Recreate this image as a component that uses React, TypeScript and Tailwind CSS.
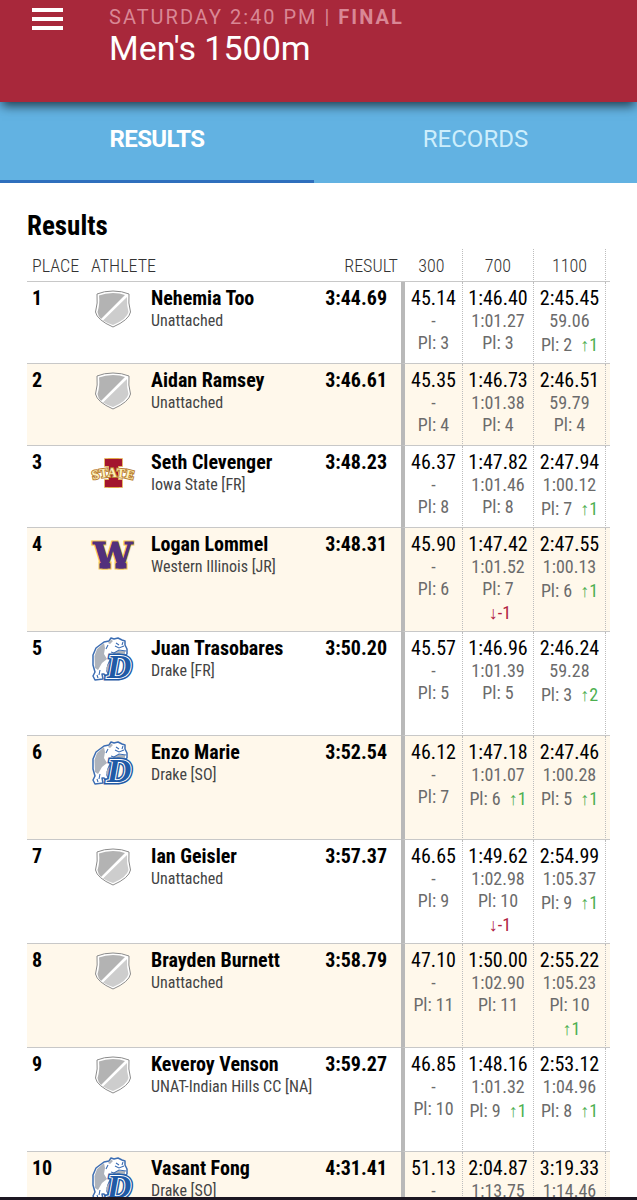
import { useState } from 'react';

type Team = 'none' | 'iowa' | 'wiu' | 'drake';

interface Split {
    time: string;
    lap: string;
    place: number;
    move?: number;
}

interface Result {
    place: number;
    name: string;
    school: string;
    team: Team;
    time: string;
    splits: Split[];
    tall?: boolean;
}

const DISTANCES = ['300', '700', '1100'];

const results: Result[] = [
    {
        place: 1, name: 'Nehemia Too', school: 'Unattached', team: 'none', time: '3:44.69',
        splits: [
            { time: '45.14', lap: '-', place: 3 },
            { time: '1:46.40', lap: '1:01.27', place: 3 },
            { time: '2:45.45', lap: '59.06', place: 2, move: 1 },
        ],
    },
    {
        place: 2, name: 'Aidan Ramsey', school: 'Unattached', team: 'none', time: '3:46.61',
        splits: [
            { time: '45.35', lap: '-', place: 4 },
            { time: '1:46.73', lap: '1:01.38', place: 4 },
            { time: '2:46.51', lap: '59.79', place: 4 },
        ],
    },
    {
        place: 3, name: 'Seth Clevenger', school: 'Iowa State [FR]', team: 'iowa', time: '3:48.23',
        splits: [
            { time: '46.37', lap: '-', place: 8 },
            { time: '1:47.82', lap: '1:01.46', place: 8 },
            { time: '2:47.94', lap: '1:00.12', place: 7, move: 1 },
        ],
    },
    {
        place: 4, name: 'Logan Lommel', school: 'Western Illinois [JR]', team: 'wiu', time: '3:48.31', tall: true,
        splits: [
            { time: '45.90', lap: '-', place: 6 },
            { time: '1:47.42', lap: '1:01.52', place: 7, move: -1 },
            { time: '2:47.55', lap: '1:00.13', place: 6, move: 1 },
        ],
    },
    {
        place: 5, name: 'Juan Trasobares', school: 'Drake [FR]', team: 'drake', time: '3:50.20', tall: true,
        splits: [
            { time: '45.57', lap: '-', place: 5 },
            { time: '1:46.96', lap: '1:01.39', place: 5 },
            { time: '2:46.24', lap: '59.28', place: 3, move: 2 },
        ],
    },
    {
        place: 6, name: 'Enzo Marie', school: 'Drake [SO]', team: 'drake', time: '3:52.54', tall: true,
        splits: [
            { time: '46.12', lap: '-', place: 7 },
            { time: '1:47.18', lap: '1:01.07', place: 6, move: 1 },
            { time: '2:47.46', lap: '1:00.28', place: 5, move: 1 },
        ],
    },
    {
        place: 7, name: 'Ian Geisler', school: 'Unattached', team: 'none', time: '3:57.37', tall: true,
        splits: [
            { time: '46.65', lap: '-', place: 9 },
            { time: '1:49.62', lap: '1:02.98', place: 10, move: -1 },
            { time: '2:54.99', lap: '1:05.37', place: 9, move: 1 },
        ],
    },
    {
        place: 8, name: 'Brayden Burnett', school: 'Unattached', team: 'none', time: '3:58.79', tall: true,
        splits: [
            { time: '47.10', lap: '-', place: 11 },
            { time: '1:50.00', lap: '1:02.90', place: 11 },
            { time: '2:55.22', lap: '1:05.23', place: 10, move: 1 },
        ],
    },
    {
        place: 9, name: 'Keveroy Venson', school: 'UNAT-Indian Hills CC [NA]', team: 'none', time: '3:59.27', tall: true,
        splits: [
            { time: '46.85', lap: '-', place: 10 },
            { time: '1:48.16', lap: '1:01.32', place: 9, move: 1 },
            { time: '2:53.12', lap: '1:04.96', place: 8, move: 1 },
        ],
    },
    {
        place: 10, name: 'Vasant Fong', school: 'Drake [SO]', team: 'drake', time: '4:31.41', tall: true,
        splits: [
            { time: '51.13', lap: '-', place: 12 },
            { time: '2:04.87', lap: '1:13.75', place: 12 },
            { time: '3:19.33', lap: '1:14.46', place: 12 },
        ],
    },
];

function TeamLogo({ team }: { team: Team }) {
    if (team === 'iowa') {
        return (
            <svg className="overflow-visible" width="44" height="44" viewBox="0 0 44 44" aria-hidden="true">
                <g fill="#a3152e" stroke="#e0a545" strokeWidth="1.600" paintOrder="stroke">
                    <rect x="14" y="8" width="17" height="7" />
                    <rect x="14" y="29" width="17" height="7" />
                    <rect x="18" y="8" width="9" height="28" />
                </g>
                <rect x="14" y="8" width="17" height="7" fill="#a3152e" />
                <rect x="14" y="29" width="17" height="7" fill="#a3152e" />
                <path id="state-arc" d="M0 29.500 Q22 22.500 44 29.500" fill="none" />
                <text textAnchor="middle" fontFamily="Liberation Serif" fontWeight="bold" fontSize="13" fill="#fdf0b8" stroke="#b98035" strokeWidth="2" paintOrder="stroke">
                    <textPath href="#state-arc" startOffset="50%">STATE</textPath>
                </text>
            </svg>
        );
    }
    if (team === 'wiu') {
        return (
            <svg className="overflow-visible" width="44" height="44" viewBox="0 0 44 44" aria-hidden="true">
                <g fill="#52307c" stroke="#f3c54b" strokeWidth="3" paintOrder="stroke">
                    <text x="22" y="35" textAnchor="middle" fontFamily="DejaVu Serif" fontWeight="bold" fontSize="35">W</text>
                    <rect x="9" y="30" width="10" height="5" />
                    <rect x="25" y="30" width="10" height="5" />
                </g>
                <g fill="#52307c" stroke="#52307c">
                    <text x="22" y="35" textAnchor="middle" fontFamily="DejaVu Serif" fontWeight="bold" fontSize="35">W</text>
                    <rect x="9" y="31" width="10" height="4" />
                    <rect x="25" y="31" width="10" height="4" />
                </g>
            </svg>
        );
    }
    if (team === 'drake') {
        return (
            <svg className="overflow-visible" width="44" height="44" viewBox="0 0 44 44" aria-hidden="true">
                <path d="M13 5 L18 4 L20 1 L23 2 L27 1 L31 3 L34 4 L34 8 L36 12 L36 17 L33 19 L20 21 L17 28 L16 34 L18 39 L15 40 L13 37 L11 37 L12 42 L4 43 L2 39 L4 35 L2 28 L2 18 L5 11 Z" fill="#fff" stroke="#3c6db3" strokeWidth="1.500" strokeLinejoin="round" />
                <path d="M13 6 L6 12 L3.500 19 L4 31 L7 33 L11 26 L16 22 L13 17 L14 11 Z" fill="#aeb3bb" />
                <path d="M22 16 L27 14 L34 14 L34 17 L30 19 L23 19 Z M20 2.500 L22 4 L19 7 L17 6 Z M15 31 L18 26 L21 27 L17 36 Z" fill="#aeb3bb" />
                <path d="M24 9 L28 11 L33 9 M25 6 L28 8 M32 5 L31 8 M20 15 L23 16 L28 13 L35 14 M17 8 L15 12 M22 19 L27 17 L33 18 M9 33 L8 38 M6 38 L7 41" fill="none" stroke="#3c6db3" strokeWidth="1.100" />
                <text x="28" y="41" textAnchor="middle" fontFamily="Liberation Serif" fontWeight="bold" fontStyle="italic" fontSize="34" fill="#1f5aa6" stroke="#1f5aa6" strokeWidth="5" paintOrder="stroke">D</text>
                <text x="28" y="41" textAnchor="middle" fontFamily="Liberation Serif" fontWeight="bold" fontStyle="italic" fontSize="34" fill="#1f5aa6" stroke="#fff" strokeWidth="2" paintOrder="stroke">D</text>
            </svg>
        );
    }
    return (
        <svg width="44" height="44" viewBox="0 0 44 44" aria-hidden="true">
            <path d="M22 4 Q31 4 38 7 Q37 16 39.500 25 Q38 33 22 40 Q6 33 4.500 25 Q7 16 6 7 Q13 4 22 4 Z" fill="#fff" stroke="#8c8c8c" />
            <path d="M22 6 Q29 6 34 8 L10 32 Q7 29 6.500 25 Q9 17 8 8.500 Q14 6 22 6 Z" fill="#b3b3b3" />
            <path d="M36 10 Q35.500 18 37.500 25 Q36 32 22 38 Q16 36 12 33.500 Z" fill="#cdcdcd" />
        </svg>
    );
}

function SplitCell({ split, first }: { split: Split; first: boolean }) {
    const move = split.move ?? 0;
    // Drops and two-digit places push the arrow to its own line
    const wraps = move < 0 || (move > 0 && split.place > 9);

    return (
        <td className={`border-b border-b-[#c8c8c8] border-r border-r-[#bdbdbd] [border-right-style:dotted] pt-1 text-center align-top whitespace-nowrap ${first ? 'border-l-4 border-l-[#b9b9b9]' : ''}`}>
            <div className="text-[20px] leading-[24px] text-black">{split.time}</div>
            <div className="text-[18px] leading-[22px] text-[#6b6b6b]">
                <div>{split.lap}</div>
                {move > 0 && !wraps ? (
                    <div className="flex justify-center gap-2 pt-[2px]">
                        <span>Pl: {split.place}</span>
                        <span className="text-[#4caf50]">↑{move}</span>
                    </div>
                ) : (
                    <div>Pl: {split.place}</div>
                )}
                {wraps && (
                    <div className={`pt-[2px] pl-1 ${move < 0 ? 'text-[#b0203f]' : 'text-[#4caf50]'}`}>
                        {move < 0 ? '↓' : '↑'}{move}
                    </div>
                )}
            </div>
        </td>
    );
}

function App() {
    const [tab, setTab] = useState('RESULTS');

    return (
        <div className="flex h-screen flex-col overflow-hidden bg-white font-['Roboto',sans-serif]">
            <header className="relative z-10 flex shrink-0 items-start bg-[#a8283b] pb-[34px] shadow-[0_6px_10px_-2px_rgba(0,0,0,0.65)]">
                <button type="button" aria-label="Menu" className="ml-8 mt-2 flex w-[31px] cursor-pointer flex-col gap-[5px]">
                    <span className="h-1 w-full bg-white" />
                    <span className="h-1 w-full bg-white" />
                    <span className="h-1 w-full bg-white" />
                </button>
                <div className="ml-[46px] pt-[5px]">
                    <p className="text-[20px] leading-[24px] tracking-widest text-[#d98795]">
                        SATURDAY 2:40 PM | <b>FINAL</b>
                    </p>
                    <h1 className="text-[34px] leading-[39px] text-white">Men's 1500m</h1>
                </div>
            </header>

            <nav className="grid shrink-0 grid-cols-[35fr_36fr] bg-[#62b2e2]">
                {['RESULTS', 'RECORDS'].map((name) => (
                    <button
                        key={name}
                        type="button"
                        onClick={() => setTab(name)}
                        className={`h-[81px] cursor-pointer border-b-[3px] pb-1 text-[24px] ${tab === name ? 'border-[#2f6fbd] font-bold tracking-tight text-white' : 'border-transparent text-[#cdeefc]'}`}
                    >
                        {name}
                    </button>
                ))}
            </nav>

            <main className="min-h-0 flex-1 overflow-hidden px-[27px] pt-[27px] font-['Roboto_Condensed','Roboto',sans-serif]">
                <h2 className="text-[27px] font-bold leading-[32px] text-black">Results</h2>
                <table className="mt-[7px] w-full table-fixed border-separate border-spacing-0">
                    <colgroup>
                        <col className="w-[59px]" />
                        <col className="w-[65px]" />
                        <col />
                        <col className="w-[80px]" />
                        <col className="w-[62px]" />
                        <col className="w-[71px]" />
                        <col className="w-[72px]" />
                        <col className="w-[4px]" />
                    </colgroup>
                    <thead>
                        <tr className="h-[33px] text-[18px] text-[#333]">
                            <th className="border-b border-[#c8c8c8] pl-[5px] text-left font-light">PLACE</th>
                            <th colSpan={2} className="border-b border-[#c8c8c8] pl-[5px] text-left font-light">ATHLETE</th>
                            <th className="border-b border-[#c8c8c8] pr-[3px] text-right font-light">RESULT</th>
                            {DISTANCES.map((distance) => (
                                <th
                                    key={distance}
                                    className="border-b border-b-[#c8c8c8] border-r border-r-[#bdbdbd] [border-right-style:dotted] font-light first-of-type:pl-1"
                                >
                                    {distance}
                                </th>
                            ))}
                            <th className="border-b border-[#c8c8c8]" />
                        </tr>
                    </thead>
                    <tbody>
                        {results.map((result) => (
                            <tr key={result.place} className={`even:bg-[#fff8eb] ${result.tall ? 'h-[104px]' : 'h-[82px]'}`}>
                                <td className="border-b border-[#c8c8c8] pt-1 pl-[5px] align-top text-[20px] font-bold leading-[24px]">{result.place}</td>
                                <td className="border-b border-[#c8c8c8] pt-[5px] pl-[5px] align-top">
                                    <TeamLogo team={result.team} />
                                </td>
                                <td className="border-b border-[#c8c8c8] pt-1 align-top whitespace-nowrap">
                                    <div className="text-[20px] font-bold leading-[24px] text-black">{result.name}</div>
                                    <div className="text-[16px] leading-[22px] text-[#444]">{result.school}</div>
                                </td>
                                <td className="border-b border-[#c8c8c8] pt-1 pr-[14px] text-right align-top text-[20px] font-bold leading-[24px]">{result.time}</td>
                                {result.splits.map((split, i) => (
                                    <SplitCell key={DISTANCES[i]} split={split} first={i === 0} />
                                ))}
                                <td className="border-b border-[#c8c8c8]" />
                            </tr>
                        ))}
                    </tbody>
                </table>
            </main>

            <div className="h-[3px] shrink-0 bg-[#1d1722]" />
        </div>
    );
}

export default App;
